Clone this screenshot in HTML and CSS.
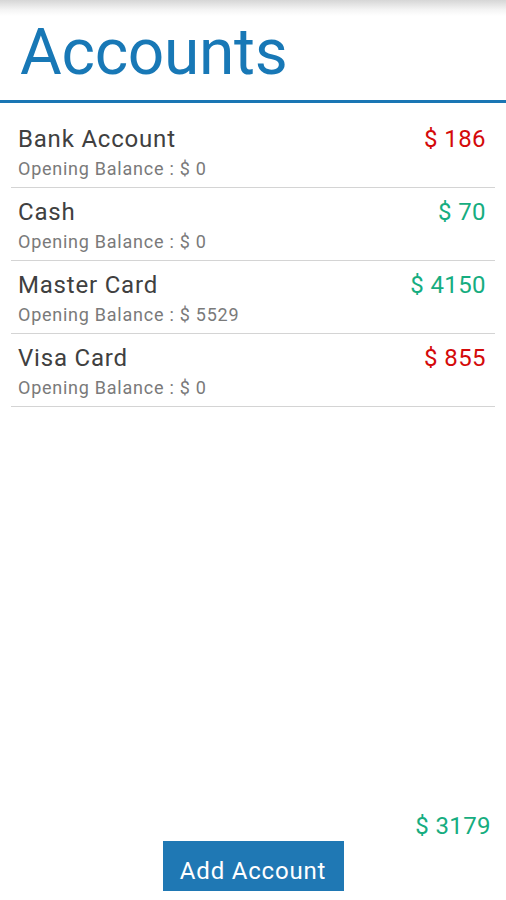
FILE: index.html
```html
<!DOCTYPE html>
<html lang="en">
  <head>
    <meta charset="UTF-8" />
    <title>Accounts</title>
    <link rel="stylesheet" href="styles.css">
  </head>

  <body>
    <div class="app">
      <div class="topbar"></div>
      <h1 class="title">Accounts</h1>

      <ul class="account-list">
        <li class="account">
          <div class="account-info">
            <div class="account-name">Bank Account</div>
            <div class="account-opening">Opening Balance : $ 0</div>
          </div>
          <div class="amount negative">$ 186</div>
        </li>
        <li class="account">
          <div class="account-info">
            <div class="account-name">Cash</div>
            <div class="account-opening">Opening Balance : $ 0</div>
          </div>
          <div class="amount positive">$ 70</div>
        </li>
        <li class="account">
          <div class="account-info">
            <div class="account-name">Master Card</div>
            <div class="account-opening">Opening Balance : $ 5529</div>
          </div>
          <div class="amount positive">$ 4150</div>
        </li>
        <li class="account">
          <div class="account-info">
            <div class="account-name">Visa Card</div>
            <div class="account-opening">Opening Balance : $ 0</div>
          </div>
          <div class="amount negative">$ 855</div>
        </li>
      </ul>

      <div class="footer">
        <div class="total positive">$ 3179</div>
        <button class="add-btn">Add Account</button>
      </div>
    </div>
  </body>
</html>
```

FILE: styles.css
```css
body {
  margin: 0;
  font-family: Roboto, "Liberation Sans", sans-serif;
  background: #fff;
}

.app {
  display: flex;
  flex-direction: column;
  height: 900px;
}

.topbar {
  height: 16px;
  background: linear-gradient(to bottom, #d6d6d6, #f4f4f4 60%, #fff);
}

.title {
  margin: 0;
  padding: 0 0 0 20px;
  height: 84px;
  line-height: 74px;
  font-size: 64px;
  font-weight: normal;
  letter-spacing: -0.3px;
  color: #1878b6;
  border-bottom: 3px solid #1a76b4;
}

.account-list {
  list-style: none;
  margin: 0;
  padding: 12px 11px 0 11px;
}

.account {
  display: flex;
  justify-content: space-between;
  height: 72px;
  padding: 0 9px 0 7px;
  border-bottom: 1px solid #d4d4d4;
}

.account-name {
  font-size: 24px;
  line-height: 28px;
  margin-top: 10px;
  letter-spacing: 0.8px;
  color: #404040;
}

.account-opening {
  font-size: 18px;
  line-height: 22px;
  margin-top: 5px;
  letter-spacing: 0.75px;
  color: #7a7a7a;
}

.amount {
  font-size: 24px;
  line-height: 28px;
  margin-top: 10px;
  letter-spacing: 0.4px;
}

.negative {
  color: #d40a0a;
}

.positive {
  color: #16ad80;
}

.footer {
  margin-top: auto;
  display: flex;
  flex-direction: column;
  align-items: center;
  padding-bottom: 9px;
}

.total {
  align-self: flex-end;
  font-size: 24px;
  line-height: 28px;
  letter-spacing: 0.4px;
  margin-right: 15px;
  margin-bottom: 1px;
}

.add-btn {
  width: 181px;
  height: 50px;
  border: none;
  background: #1f78b4;
  color: #fff;
  font-family: Roboto, "Liberation Sans", sans-serif;
  font-size: 24px;
  letter-spacing: 0.8px;
  padding: 9px 0 0 0;
}
```
